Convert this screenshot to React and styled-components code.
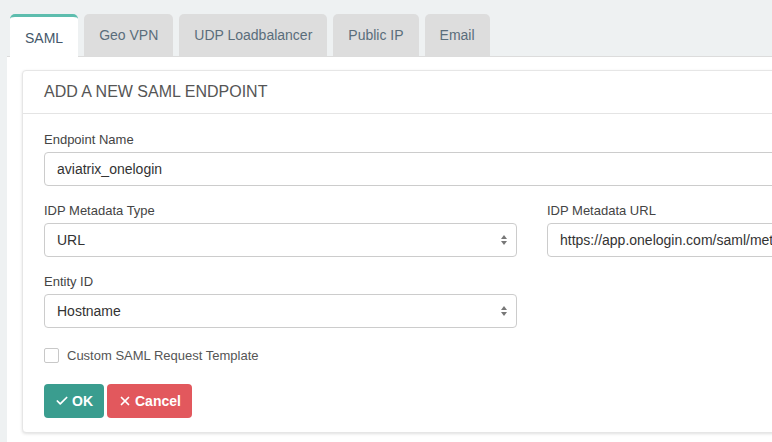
import React from "react";
import styled, { createGlobalStyle } from "styled-components";
import { Check, X } from "lucide-react";

const GlobalStyle = createGlobalStyle`
  html, body {
    margin: 0;
    padding: 0;
    width: 772px;
    height: 442px;
    overflow: hidden;
    background: #eef1f2;
    font-family: "Liberation Sans", Arial, sans-serif;
  }
  * { box-sizing: border-box; }
`;

const tabs = ["SAML", "Geo VPN", "UDP Loadbalancer", "Public IP", "Email"];

const App = () => {
  return (
    <>
      <GlobalStyle />
      <Page>
        <TabBar>
          {tabs.map((t, i) => (
            <Tab key={t} $active={i === 0}>
              {t}
            </Tab>
          ))}
        </TabBar>
        <Panel>
          <Card>
            <CardHeader>ADD A NEW SAML ENDPOINT</CardHeader>
            <CardBody>
              <Group>
                <Label>Endpoint Name</Label>
                <Input>aviatrix_onelogin</Input>
              </Group>
              <Row>
                <Col>
                  <Group>
                    <Label>IDP Metadata Type</Label>
                    <Select>
                      URL
                      <Arrows />
                    </Select>
                  </Group>
                  <Group>
                    <Label>Entity ID</Label>
                    <Select>
                      Hostname
                      <Arrows />
                    </Select>
                  </Group>
                </Col>
                <Col>
                  <Group>
                    <Label>IDP Metadata URL</Label>
                    <Input>https://app.onelogin.com/saml/metadata/123456</Input>
                  </Group>
                </Col>
              </Row>
              <CheckRow>
                <CheckBox />
                <CheckLabel>Custom SAML Request Template</CheckLabel>
              </CheckRow>
              <Buttons>
                <Btn $color="#3a9d8f">
                  <Check size={14} strokeWidth={3} />
                  OK
                </Btn>
                <Btn $color="#e2585d">
                  <X size={14} strokeWidth={3} />
                  Cancel
                </Btn>
              </Buttons>
            </CardBody>
          </Card>
        </Panel>
      </Page>
    </>
  );
};

const Arrows = () => (
  <ArrowSvg width="8" height="12" viewBox="0 0 8 12">
    <path d="M4 1 L7 5 L1 5 Z" fill="#777" />
    <path d="M4 11 L7 7 L1 7 Z" fill="#777" />
  </ArrowSvg>
);

export default App;

const Page = styled.div`
  width: 772px;
  height: 442px;
  padding: 14px 0 0 7px;
  display: flex;
  flex-direction: column;
`;

const TabBar = styled.div`
  display: flex;
  gap: 6px;
  padding-left: 3px;
  height: 43px;
  border-bottom: 1px solid #dcdcdc;
  align-items: flex-start;
`;

const Tab = styled.div`
  height: ${(p) => (p.$active ? "44px" : "42px")};
  padding: 0 15px;
  display: flex;
  align-items: center;
  font-size: 14px;
  color: ${(p) => (p.$active ? "#44576a" : "#5a6d7b")};
  background: ${(p) => (p.$active ? "#ffffff" : "#dddddd")};
  border-top: ${(p) => (p.$active ? "3px solid #5dbdae" : "none")};
  border-radius: 5px 5px 0 0;
  position: relative;
  z-index: ${(p) => (p.$active ? 1 : 0)};
`;

const Panel = styled.div`
  flex: 1;
  background: #ffffff;
  padding: 13px 0 0 15px;
`;

const Card = styled.div`
  width: 1040px;
  background: #ffffff;
  border: 1px solid #e6e6e6;
  border-radius: 4px;
  box-shadow: 0 1px 3px rgba(0, 0, 0, 0.12);
`;

const CardHeader = styled.div`
  height: 43px;
  padding: 0 21px;
  display: flex;
  align-items: center;
  font-size: 16px;
  color: #555555;
  border-bottom: 1px solid #e4e4e4;
`;

const CardBody = styled.div`
  padding: 17px 21px 14px;
`;

const Group = styled.div`
  margin-bottom: 16px;
`;

const Label = styled.div`
  font-size: 13px;
  line-height: 18px;
  color: #444444;
  margin-bottom: 3px;
`;

const Input = styled.div`
  height: 34px;
  border: 1px solid #cccccc;
  border-radius: 4px;
  padding: 0 12px;
  display: flex;
  align-items: center;
  font-size: 14px;
  color: #333333;
  white-space: nowrap;
  overflow: hidden;
`;

const Select = styled(Input)`
  justify-content: space-between;
  padding-right: 8px;
`;

const ArrowSvg = styled.svg`
  display: block;
`;

const Row = styled.div`
  display: flex;
  gap: 30px;
`;

const Col = styled.div`
  width: 473px;
  flex-shrink: 0;
`;

const CheckRow = styled.div`
  display: flex;
  align-items: center;
  gap: 8px;
  margin-top: 4px;
  height: 14px;
`;

const CheckBox = styled.div`
  width: 15px;
  height: 15px;
  border: 1px solid #c8c8c8;
  border-radius: 2px;
  background: #fff;
`;

const CheckLabel = styled.span`
  font-size: 13px;
  color: #555555;
`;

const Buttons = styled.div`
  display: flex;
  gap: 3px;
  margin-top: 22px;
`;

const Btn = styled.button`
  height: 34px;
  padding: 0 11px;
  border: none;
  border-radius: 4px;
  background: ${(p) => p.$color};
  color: #ffffff;
  font-family: "Liberation Sans", Arial, sans-serif;
  font-size: 14px;
  font-weight: bold;
  display: flex;
  align-items: center;
  gap: 3px;
`;
